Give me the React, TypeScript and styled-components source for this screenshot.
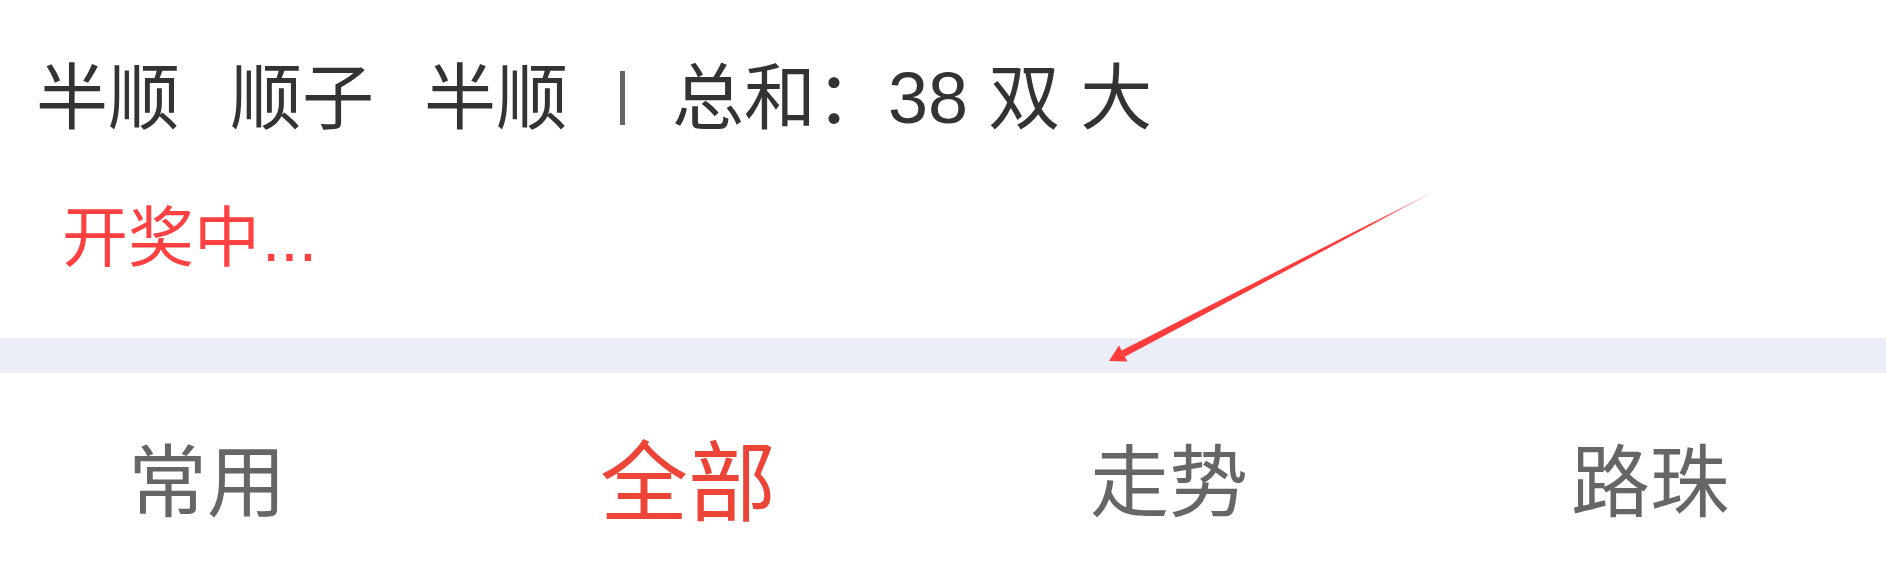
import React from "react";
import styled, { createGlobalStyle } from "styled-components";

const Global = createGlobalStyle`
  html, body { margin: 0; padding: 0; background: #ffffff; }
  body { width: 1886px; height: 587px; overflow: hidden; }
`;

const Page = styled.div`
  position: relative;
  width: 1886px;
  height: 587px;
  display: flex;
  flex-direction: column;
  background: #ffffff;
`;

const Result = styled.div`
  display: flex;
  align-items: center;
  padding: 62px 0 0 36px;
  height: 72px;
  font-family: "Liberation Sans", "Noto Sans CJK SC", sans-serif;
  font-size: 72px;
  line-height: 72px;
  color: #333333;
  white-space: pre;
`;

const Tag = styled.span`
  margin-right: 50px;
`;

const Divider = styled.span`
  width: 5px;
  height: 54px;
  background: #666666;
  margin: 0 47px 0 2px;
`;

const Sum = styled.span``;

const Status = styled.div`
  margin-top: 71px;
  padding-left: 62px;
  height: 67px;
  font-family: "Liberation Serif", "Noto Sans CJK SC", serif;
  font-size: 66px;
  line-height: 67px;
  color: #ff4141;
`;

const Dots = styled.span`
  font-family: "Liberation Sans", sans-serif;
  margin-left: 2px;
`;

const Band = styled.div`
  margin-top: 66px;
  height: 35px;
  background: #ebeef7;
`;

const Tabs = styled.nav`
  flex: 1;
  display: flex;
  align-items: center;
  gap: 301px;
  padding: 9px 0 0 117px;
`;

const Tab = styled.span<{ $active?: boolean }>`
  display: flex;
  justify-content: center;
  width: 180px;
  white-space: nowrap;
  font-family: "Liberation Serif", "Noto Sans CJK SC", serif;
  font-size: ${(p) => (p.$active ? "88px" : "79px")};
  line-height: 1;
  color: ${(p) => (p.$active ? "#ec4437" : "#666666")};
`;

const Overlay = styled.svg`
  position: absolute;
  left: 0;
  top: 0;
  pointer-events: none;
`;

const tabs = [
  { label: "常用" },
  { label: "全部", active: true },
  { label: "走势" },
  { label: "路珠" },
];

export default function App() {
  return (
    <>
      <Global />
      <Page>
        <Result>
          <Tag>半顺</Tag>
          <Tag>顺子</Tag>
          <Tag>半顺</Tag>
          <Divider />
          <Sum>总和：38 双 大</Sum>
        </Result>
        <Status>
          开奖中<Dots>...</Dots>
        </Status>
        <Band />
        <Tabs>
          {tabs.map((t) => (
            <Tab key={t.label} $active={t.active}>
              {t.label}
            </Tab>
          ))}
        </Tabs>
        <Overlay width="1886" height="587" viewBox="0 0 1886 587">
          <defs>
            <linearGradient id="shaft" gradientUnits="userSpaceOnUse" x1="1431" y1="193" x2="1123" y2="354">
              <stop offset="0" stopColor="#ff3c3c" stopOpacity="0.15" />
              <stop offset="0.2" stopColor="#ff3c3c" stopOpacity="1" />
              <stop offset="1" stopColor="#ff3c3c" stopOpacity="1" />
            </linearGradient>
          </defs>
          <polygon points="1431.2,193.3 1430.8,192.7 1121.6,350.5 1124.8,356.7" fill="url(#shaft)" />
          <polygon points="1109,361 1119,345.6 1127.4,361.6" fill="#ff3c3c" />
        </Overlay>
      </Page>
    </>
  );
}
